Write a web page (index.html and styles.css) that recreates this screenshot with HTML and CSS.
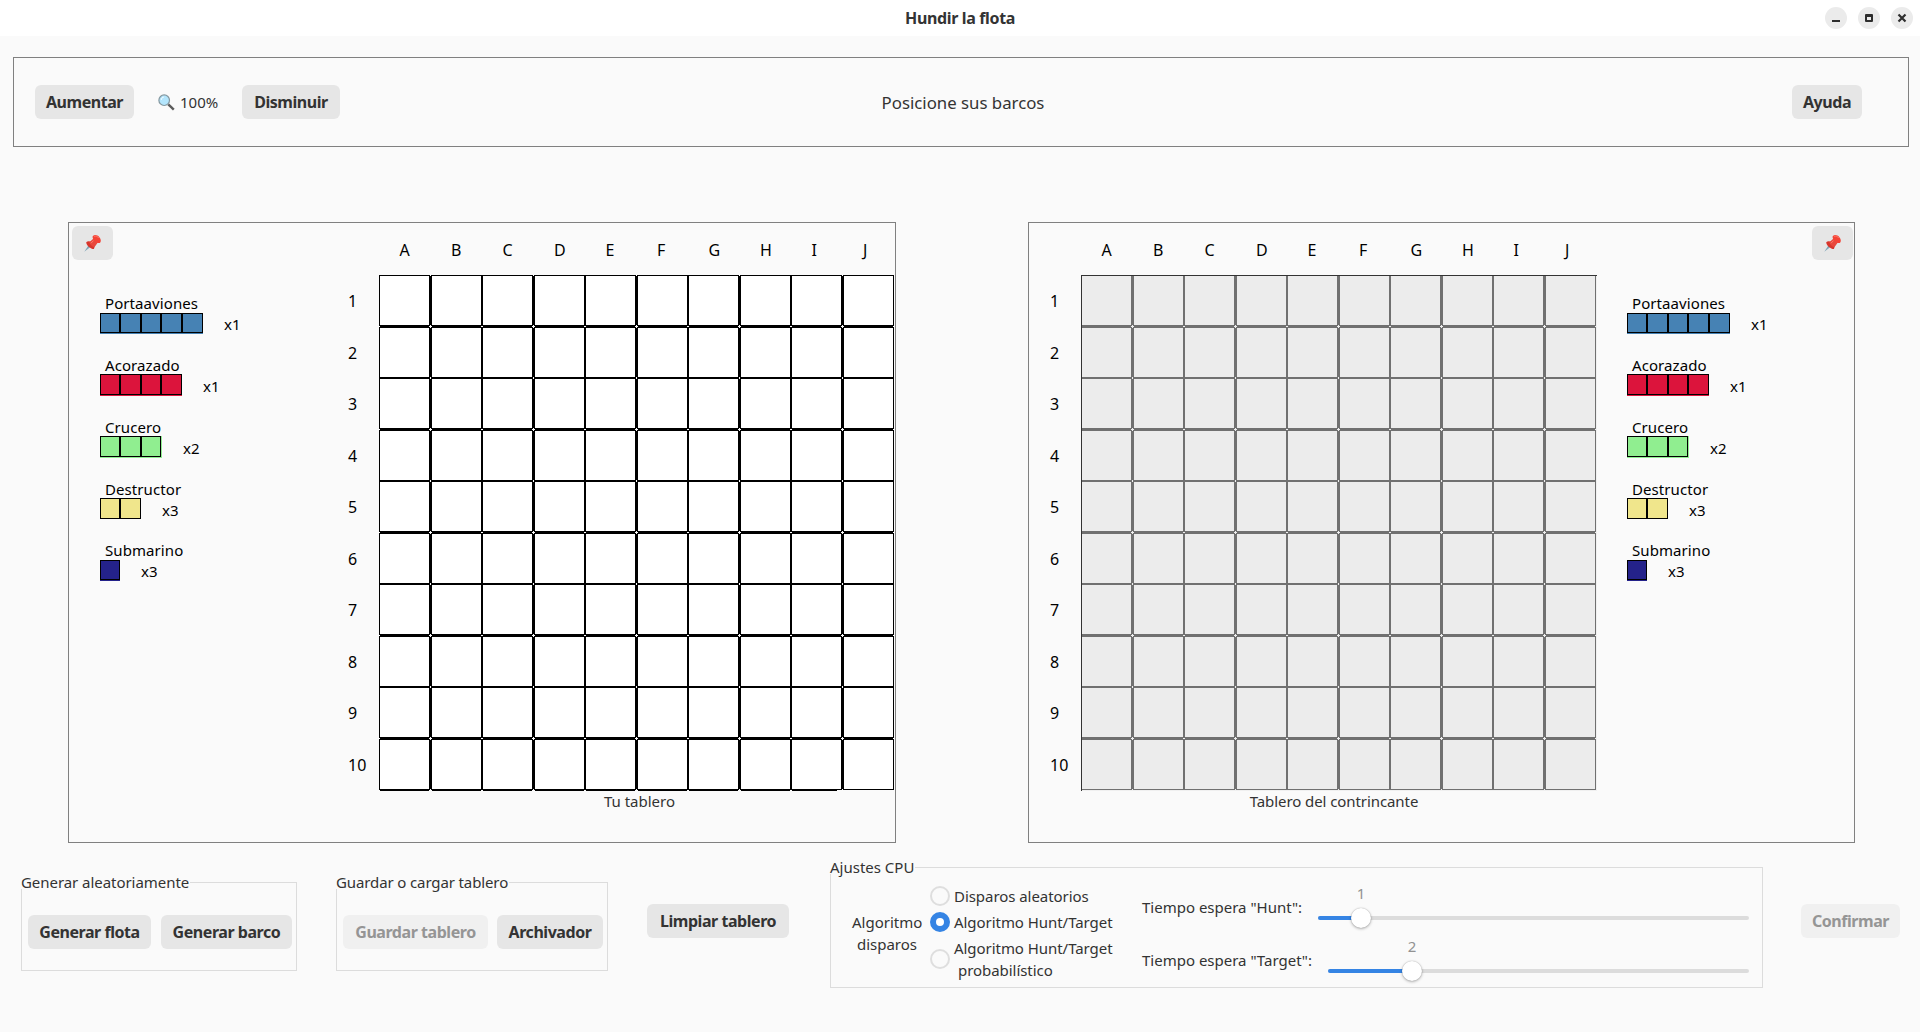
FILE: index.html
```html
<!DOCTYPE html>
<html lang="es">
<head>
<meta charset="utf-8">
<title>Hundir la flota</title>
<link rel="stylesheet" href="styles.css">
</head>
<body>
<svg class="defs" width="0" height="0">
  <symbol id="pin" viewBox="0 0 17 17">
    <path d="M.3 16.8 5.2 9.2l2.1 2z" fill="#7fa5b8"/>
    <path d="M2.2 7.3c1.500-1.500 4-1.200 5.900.4 2 1.700 3.100 4.100 1.800 6.400-2.800.1-7.600-3.300-7.700-6.800z" fill="#d8352b"/>
    <path d="M5.300 7.200 9.800 3.200l4.200 4-3.600 5c-1.300-.2-4.800-2.700-5.100-5z" fill="#e8483c"/>
    <path d="M8.900.9c1.800-1.500 4.700-.8 6.300 1 1.700 1.900 2.100 4.200.9 5.900-1.300.8-3.900-.1-5.500-1.800C9 4.500 8.100 2.300 8.900.9z" fill="#f44336"/>
    <path d="M10.200 1.500c1.600-.8 3.600 0 4.600 1.500" fill="none" stroke="#ff7a6b" stroke-width=".9"/>
    <path d="m7 8.200 2.500-2.600" stroke="#ff7a6b" stroke-width="1"/>
  </symbol>
</svg>

<header class="titlebar">
  <h1>Hundir la flota</h1>
  <div class="window-controls">
    <span><svg viewBox="0 0 22 22"><path d="M7 13h8v2H7z"/></svg></span>
    <span><svg viewBox="0 0 22 22"><path fill-rule="evenodd" d="M8 7h6q1 0 1 1v6q0 1-1 1H8q-1 0-1-1V8q0-1 1-1zm1 3v3h4v-3z"/></svg></span>
    <span><svg viewBox="0 0 22 22"><path d="m7.500 7.500 7 7m0-7-7 7" fill="none" stroke="#2e2e2e" stroke-width="2.200"/></svg></span>
  </div>
</header>

<section class="toolbar">
  <button class="btn aumentar">Aumentar</button>
  <div class="zoom">
    <svg width="17" height="17" viewBox="0 0 17 17">
      <path d="m10.300 10.300 5.500 5.300" stroke="#5a5a5a" stroke-width="2.400"/>
      <circle cx="6.200" cy="6.200" r="5.300" fill="#b3e5fc" stroke="#84979f" stroke-width="1.200"/>
      <path d="M3.300 5.800c.1-1.500 1.100-2.600 2.500-2.700" fill="none" stroke="#fff" stroke-width="1"/>
    </svg>
    <span>100%</span>
  </div>
  <button class="btn disminuir">Disminuir</button>
  <p class="status">Posicione sus barcos</p>
  <button class="btn ayuda">Ayuda</button>
</section>

<main class="boards">
  <section class="board own">
    <div class="fleet">
      <button class="btn pin"><svg width="17" height="17"><use href="#pin"/></svg></button>
      <ul class="ships"></ul>
    </div>
    <div class="rows"></div>
    <div class="sea">
      <div class="cols"></div>
      <div class="grid"></div>
      <p class="caption">Tu tablero</p>
    </div>
  </section>
  <section class="board enemy">
    <div class="rows"></div>
    <div class="sea">
      <div class="cols"></div>
      <div class="grid"></div>
      <p class="caption">Tablero del contrincante</p>
    </div>
    <div class="fleet">
      <button class="btn pin"><svg width="17" height="17"><use href="#pin"/></svg></button>
      <ul class="ships"></ul>
    </div>
  </section>
</main>

<footer class="controls">
  <div class="group generate">
    <span class="legend">Generar aleatoriamente</span>
    <button class="btn flota">Generar flota</button>
    <button class="btn barco">Generar barco</button>
  </div>
  <div class="group save">
    <span class="legend">Guardar o cargar tablero</span>
    <button class="btn guardar" disabled>Guardar tablero</button>
    <button class="btn archivador">Archivador</button>
  </div>
  <button class="btn limpiar">Limpiar tablero</button>
  <div class="group cpu">
    <span class="legend">Ajustes CPU</span>
    <p class="algo-title">Algoritmo<br>disparos</p>
    <div class="radios">
      <div class="radio"><i></i><span>Disparos aleatorios</span></div>
      <div class="radio checked"><i></i><span>Algoritmo Hunt/Target</span></div>
      <div class="radio tall"><i></i><span>Algoritmo Hunt/Target<br><em>probabilístico</em></span></div>
    </div>
    <div class="sliders">
      <div class="slider hunt"><span class="name">Tiempo espera "Hunt":</span><div class="track"><div class="fill"></div><b>1</b><i></i></div></div>
      <div class="slider target"><span class="name">Tiempo espera "Target":</span><div class="track"><div class="fill"></div><b>2</b><i></i></div></div>
    </div>
  </div>
  <button class="btn confirmar" disabled>Confirmar</button>
</footer>
<script src="boards.js"></script>
</body>
</html>
```

FILE: styles.css
```css
* { box-sizing: border-box; margin: 0; padding: 0; }

body {
  width: 1920px;
  height: 1032px;
  overflow: hidden;
  background: #fafafa;
  color: #333;
  font: 15px/22px "Noto Sans", sans-serif;
}

.defs { position: absolute; }
svg { display: block; }

.titlebar {
  height: 36px;
  display: grid;
  grid-template-columns: 1fr auto 1fr;
  align-items: center;
  background: #fff;
}
.titlebar h1 { grid-column: 2; font-size: 16px; line-height: 22px; letter-spacing: -.350px; white-space: nowrap; }
.window-controls { display: flex; justify-content: flex-end; gap: 11px; padding-right: 7px; }
.window-controls span { width: 22px; height: 22px; border-radius: 50%; background: #ebebeb; }
.window-controls svg { width: 22px; height: 22px; fill: #2e2e2e; }

.btn {
  flex: none;
  height: 34px;
  border: 0;
  border-radius: 6px;
  background: #e6e6e6;
  color: #333;
  font: bold 16px/34px "Noto Sans", sans-serif;
  letter-spacing: -.450px;
  text-align: center;
  white-space: nowrap;
}
.btn:disabled { background: #f0f0f0; color: #959595; }

.toolbar {
  display: flex;
  align-items: center;
  height: 90px;
  margin: 21px 11px 0 13px;
  padding: 0 46px 0 21px;
  border: 1px solid #808080;
}
.aumentar { width: 99px; }
.zoom { display: flex; gap: 5px; width: 61px; margin: 0 23px 0 24px; align-items: center; }
.disminuir { width: 98px; }
.status { width: 200px; padding-top: 1px; margin-left: 523px; text-align: center; font-size: 16.800px; white-space: nowrap; }
.ayuda { width: 70px; margin-left: auto; }

.boards { display: flex; justify-content: space-between; padding: 75px 65px 0 68px; color: #000; }
.board { display: flex; height: 621px; border: 1px solid #808080; }
.own { width: 828px; }
.enemy { width: 827px; }

.fleet { display: flex; flex-direction: column; padding: 3px; }
.own .fleet { width: 278px; }
.enemy .fleet { flex: 1; padding-right: 1px; }
.pin { width: 41px; display: flex; align-items: center; justify-content: center; }
.enemy .pin { align-self: flex-end; }
.ships { list-style: none; padding: 32px 0 0 28px; letter-spacing: .080px; }
.enemy .ships { padding-left: 27px; }
.ships li { height: 62px; }
.ships li:nth-child(4) { height: 61px; }
.ship-name { height: 21px; padding-left: 5px; }
.ship-row { display: flex; gap: 21px; align-items: flex-start; }
.ship { display: flex; }
.ship i { width: 20px; height: 100%; border: 1px solid #000; }
.ship i:nth-child(2), .ship i:nth-child(n+4) { width: 21px; }
.portaaviones { height: 21px; padding-bottom: 1px; background: #4682b4; }
.acorazado { height: 22px; margin-top: -1px; padding-bottom: 1px; background: #dc143c; }
.crucero { height: 22px; margin-top: -1px; padding: 0 1px 1px 0; background: #90ee90; }
.destructor { height: 21px; margin-top: -1px; background: #f0e68c; }
.submarino { height: 21px; padding-bottom: 1px; background: #24228a; }

.rows { padding-top: 52px; font-size: 16px; }
.own .rows { width: 32px; padding-left: 1px; }
.enemy .rows { width: 52px; padding-left: 21px; }
.rows span { display: block; height: 51.500px; padding-top: 15px; }

.sea { width: 516px; flex: none; }
.cols { display: flex; height: 52px; padding-top: 16px; font-size: 16px; }
.cols span { width: 51.500px; padding-left: 20.500px; }

.grid { --line: #000; --cell: #fff; position: relative; width: 515px; height: 515px; background: #fff; }
.enemy .grid { --line: #707070; --cell: #ececec; width: 516px; height: 516px; background: #f0f0f0; }
.grid-row { display: flex; height: 51px; }
.grid-row:nth-child(odd) { height: 52px; }
.cell { position: relative; width: 51px; height: 51px; border: 1px solid var(--line); background: var(--cell); }
.cell:nth-child(odd) { margin-right: 1px; }
/* hairlines that close the one-pixel gap after every odd column and row */
.cell:nth-child(odd)::after { content: ""; position: absolute; left: 50px; top: 0; width: 1px; height: 49px; background: var(--line); }
.grid-row:nth-child(odd) .cell::before,
.own .grid-row:last-child .cell:not(:last-child)::before { content: ""; position: absolute; left: 0; top: 50px; width: 49px; height: 1px; background: var(--line); }
.own .grid-row:last-child .cell:nth-child(9)::before { width: 45px; }
.enemy .grid::after { content: ""; position: absolute; inset: 0; border: solid #333; border-width: 1px 0 0 1px; }

.caption { height: 22px; text-align: center; color: #333; }
.own .caption { width: 521px; }
.enemy .caption { width: 506px; margin-top: -1px; letter-spacing: -.080px; }

.controls { display: flex; padding-left: 21px; margin-top: 24px; }
.group { position: relative; display: flex; flex: none; border: 1px solid #dcdcdc; }
.legend { position: absolute; left: -1px; top: -12px; padding-right: 1px; height: 18px; background: #fafafa; white-space: nowrap; }
.save .legend { letter-spacing: -.120px; }
.generate .legend { letter-spacing: -.050px; }
.generate, .save { height: 89px; margin-top: 15px; padding: 32px 0 0 6px; }
.generate { width: 276px; gap: 10px; }
.save { width: 272px; margin-left: 39px; gap: 9px; }
.flota { width: 123px; }
.barco { width: 131px; }
.guardar { width: 145px; }
.archivador { width: 106px; }
.limpiar { width: 142px; margin: 37px 0 0 39px; }
.cpu { width: 933px; height: 121px; margin-left: 41px; }
.algo-title { width: 70px; margin: 43px 0 0 21px; text-align: center; }
.radios { width: 204px; margin-left: 8px; padding-top: 17px; white-space: nowrap; letter-spacing: -.050px; }
.radio { display: flex; gap: 4px; height: 26px; }
.radio i { width: 20px; height: 20px; margin-top: 1px; border: 2px solid #dedede; border-radius: 50%; }
.radio em { padding-left: 4px; font-style: normal; }
.radio.checked i { border: 6px solid #3584e4; background: #fff; }
.radio.tall i { margin-top: 12px; }
.sliders { width: 619px; padding-top: 28px; margin-left: 8px; }
.slider { display: flex; height: 53px; }
.name { white-space: nowrap; }
.track { position: relative; height: 4px; margin: 20px 12px 0 auto; border-radius: 2px; background: #dcdcdc; }
.hunt .track { width: 431px; }
.target .track { width: 421px; }
.fill { height: 4px; border-radius: 2px; background: #3584e4; }
.track i { position: absolute; top: -8px; width: 20px; height: 20px; border-radius: 50%; background: #fff; box-shadow: 0 1px 3px rgba(0,0,0,.3), 0 0 1px rgba(0,0,0,.3); }
.track b { position: absolute; top: -34px; width: 20px; text-align: center; font-weight: normal; color: #929292; }
.hunt .fill { width: 43px; }
.hunt i, .hunt b { left: 33px; }
.target .fill { width: 84px; }
.target i, .target b { left: 74px; }
.confirmar { width: 99px; margin: 37px 0 0 38px; }
```

FILE: boards.js
```js
const ships = [
  ["Portaaviones", 5, 1],
  ["Acorazado", 4, 1],
  ["Crucero", 3, 2],
  ["Destructor", 2, 3],
  ["Submarino", 1, 3],
];

const fleetHtml = ships.map(([name, size, count]) =>
  `<li><div class="ship-name">${name}</div><div class="ship-row">` +
  `<div class="ship ${name.toLowerCase()}">${"<i></i>".repeat(size)}</div><span>x${count}</span></div></li>`
).join("");

const row = `<div class="grid-row">${'<div class="cell"></div>'.repeat(10)}</div>`;

document.querySelectorAll(".board").forEach((board) => {
  board.querySelector(".ships").innerHTML = fleetHtml;
  board.querySelector(".cols").innerHTML = [..."ABCDEFGHIJ"].map((c) => `<span>${c}</span>`).join("");
  board.querySelector(".rows").innerHTML = Array.from({ length: 10 }, (_, i) => `<span>${i + 1}</span>`).join("");
  board.querySelector(".grid").innerHTML = row.repeat(10);
});
```
